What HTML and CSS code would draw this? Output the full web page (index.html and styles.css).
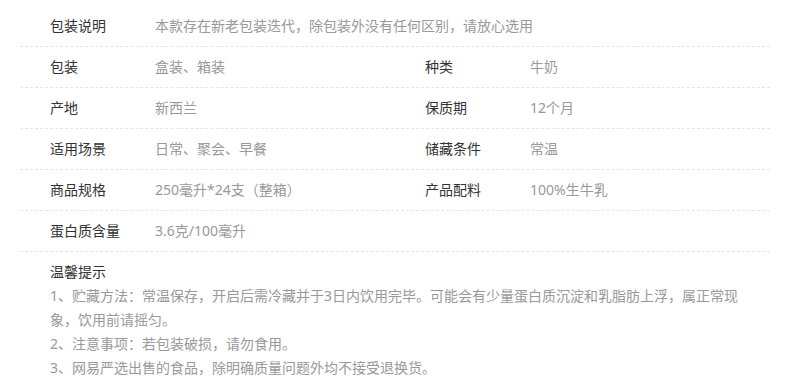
FILE: index.html
```html
<!DOCTYPE html>
<html lang="zh-CN">
<head>
<meta charset="utf-8">
<title>商品参数</title>
<link rel="stylesheet" href="styles.css">
</head>
<body>
<div class="spec">
  <div class="row">
    <div class="cell cell-full"><span class="label">包装说明</span><span class="value">本款存在新老包装迭代，除包装外没有任何区别，请放心选用</span></div>
  </div>
  <div class="row">
    <div class="cell"><span class="label">包装</span><span class="value">盒装、箱装</span></div>
    <div class="cell"><span class="label">种类</span><span class="value">牛奶</span></div>
  </div>
  <div class="row">
    <div class="cell"><span class="label">产地</span><span class="value">新西兰</span></div>
    <div class="cell"><span class="label">保质期</span><span class="value">12个月</span></div>
  </div>
  <div class="row">
    <div class="cell"><span class="label">适用场景</span><span class="value">日常、聚会、早餐</span></div>
    <div class="cell"><span class="label">储藏条件</span><span class="value">常温</span></div>
  </div>
  <div class="row">
    <div class="cell"><span class="label">商品规格</span><span class="value">250毫升*24支（整箱）</span></div>
    <div class="cell"><span class="label">产品配料</span><span class="value">100%生牛乳</span></div>
  </div>
  <div class="row">
    <div class="cell"><span class="label">蛋白质含量</span><span class="value">3.6克/100毫升</span></div>
  </div>
  <div class="notes">
    <p class="notes-title">温馨提示</p>
    <p>1、贮藏方法：常温保存，开启后需冷藏并于3日内饮用完毕。可能会有少量蛋白质沉淀和乳脂肪上浮，属正常现象，饮用前请摇匀。</p>
    <p>2、注意事项：若包装破损，请勿食用。</p>
    <p>3、网易严选出售的食品，除明确质量问题外均不接受退换货。</p>
  </div>
</div>
</body>
</html>
```

FILE: styles.css
```css
html, body {
  margin: 0;
  padding: 0;
  background: #fff;
}

body {
  font-family: "Noto Sans", "Noto Sans CJK SC", sans-serif;
  font-size: 14px;
  color: #333;
}

.spec {
  width: 750px;
  margin: 6px 20px 0;
}

.row {
  display: flex;
  height: 40px;
  align-items: center;
  border-bottom: 1px dashed #e6e6e6;
}

.cell {
  width: 375px;
  box-sizing: border-box;
  padding-left: 30px;
  display: flex;
  align-items: center;
  line-height: 20px;
}

.cell-full {
  width: 750px;
}

.label {
  width: 105px;
  flex: none;
  color: #333;
}

.value {
  color: #999;
}

.notes {
  padding: 8px 30px 0;
  line-height: 24px;
  color: #999;
}

.notes p {
  margin: 0;
}

.notes .notes-title {
  color: #333;
}
```
